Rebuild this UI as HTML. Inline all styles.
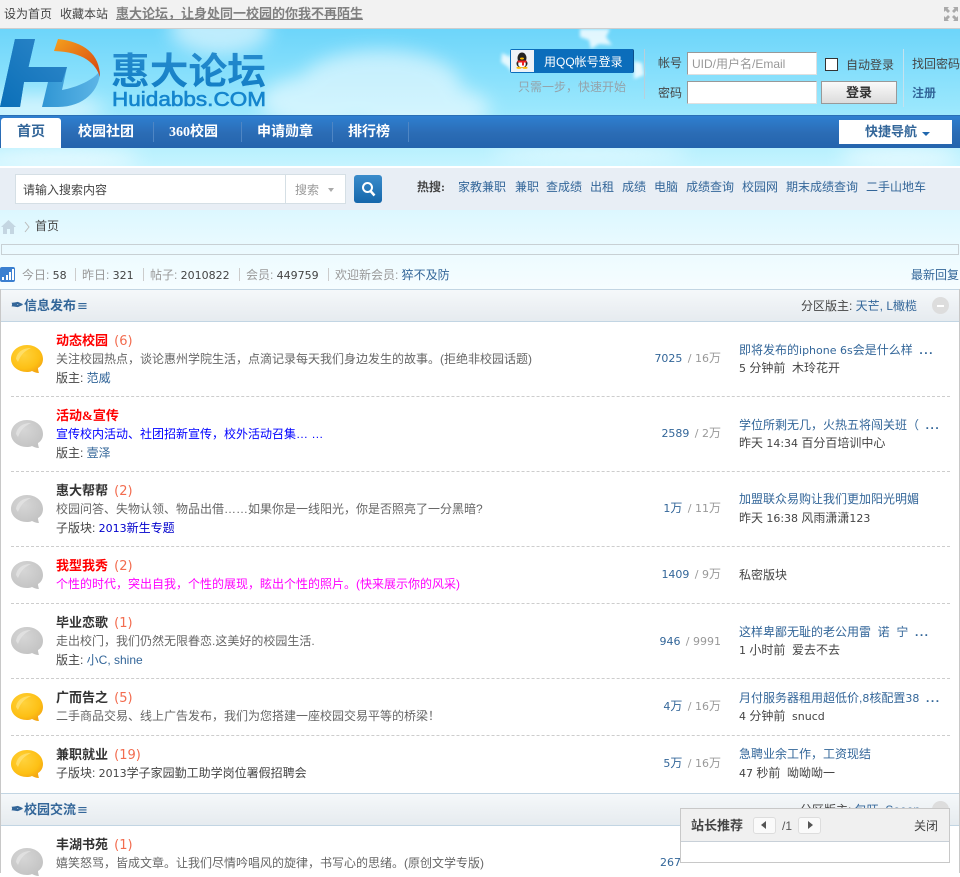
<!DOCTYPE html>
<html lang="zh"><head><meta charset="utf-8"><title>惠大论坛</title>
<style>
html,body{margin:0;padding:0}
body{width:960px;height:873px;overflow:hidden;position:relative;background:#fff;font:12px/16px "Liberation Sans","WenQuanYi Zen Hei","Noto Sans CJK SC",sans-serif;color:#444}
.a{position:absolute;white-space:nowrap}
.l{color:#369}
.g{color:#999}
.m{font-family:"DejaVu Sans",sans-serif;font-size:11px}
.b{font-family:"Liberation Serif","WenQuanYi Zen Hei","Noto Sans CJK SC",sans-serif;font-weight:700}
.c{color:#f26c4f;font:13px "DejaVu Sans",sans-serif;margin-left:2px}
.d{position:absolute;left:11px;right:10px;border-top:1px dashed #cdcdcd;height:0}
.n{color:#fff;font-size:14px;top:125px;font-family:"Liberation Serif","WenQuanYi Zen Hei","Noto Sans CJK SC",sans-serif;font-weight:700}
.s{position:absolute;top:122px;width:1px;height:20px;background:#4f86c4}
.h{position:absolute;left:1px;width:958px;height:31px;border-top:1px solid #c2d5e3;border-bottom:1px solid #c2d5e3;background:linear-gradient(#f5f8fa,#e6ebef)}
.q{display:inline-block;width:13px;font-size:15px;line-height:0}
.e{font:13px "DejaVu Sans",sans-serif;margin-left:1px}
.st{left:641px;width:80px;text-align:right;margin-top:-1px}
.st .g.m{margin-left:2px}
.el{letter-spacing:1.500px;font-weight:700}
</style></head><body>

<div class="a" style="left:0;top:0;width:960px;height:29px;background:#f2f2f2;border-bottom:1px solid #cdcdcd;box-sizing:border-box"></div>
<div class="a" style="left:4px;top:6px;color:#444">设为首页</div>
<div class="a" style="left:60px;top:6px;color:#444">收藏本站</div>
<div class="a b" style="left:116px;top:6px;color:#808080;text-decoration:underline;font-size:13px">惠大论坛，让身处同一校园的你我不再陌生</div>
<svg class="a" style="left:943px;top:6px" width="16" height="16" viewBox="0 0 16 16" fill="#aaa"><path d="M1 1h5L4.500 2.500 7 5 5 7 2.500 4.500 1 6zM15 1v5L13.500 4.500 11 7 9 5 11.500 2.500 10 1zM1 15v-5l1.500 1.500L5 9l2 2-2.500 2.500L6 15zM15 15h-5l1.500-1.500L9 11l2-2 2.500 2.500L15 10z"/></svg>

<!-- sky -->
<div class="a" style="left:0;top:29px;width:960px;height:138px;background:linear-gradient(#6dd5fa,#9ce8fd 60%,#c6f4ff)"></div>
<svg class="a" style="left:0;top:29px" width="960" height="138" viewBox="0 0 960 138">
<defs><filter id="f"><feGaussianBlur stdDeviation="9"/></filter><filter id="f2"><feGaussianBlur stdDeviation="1.500"/></filter></defs>
<g fill="#fff" opacity=".55" filter="url(#f)">
<ellipse cx="320" cy="72" rx="60" ry="26"/><ellipse cx="380" cy="55" rx="80" ry="34"/><ellipse cx="420" cy="80" rx="70" ry="25"/>
<ellipse cx="35" cy="80" rx="70" ry="14"/><ellipse cx="220" cy="0" rx="50" ry="25"/>
<ellipse cx="60" cy="130" rx="80" ry="12"/><ellipse cx="900" cy="128" rx="60" ry="12"/><ellipse cx="590" cy="125" rx="100" ry="8"/>
</g>
<g fill="#fff" opacity=".8" filter="url(#f2)">
<path d="M580 0h30l-4 8 6 8-13-1-8 5-2-9-9-3z"/>
<path d="M502 24l8 4 2-6v22l-4-6-7-5zM634 32l8 2 2 12-10 4z"/>
</g>
</svg>

<!-- logo -->
<svg class="a" style="left:0;top:38px" width="104" height="72" viewBox="0 0 104 72">
<defs>
<linearGradient id="h" x1="0" y1="1" x2="1" y2="0"><stop offset="0" stop-color="#0a6fb8"/><stop offset="1" stop-color="#2f87c9"/></linearGradient>
<linearGradient id="o" x1="0" y1="0" x2="1" y2="1"><stop offset="0" stop-color="#f5a11e"/><stop offset="1" stop-color="#d6420e"/></linearGradient>
<linearGradient id="u" x1="0" y1="0" x2="1" y2="0"><stop offset="0" stop-color="#0f7fc6"/><stop offset="1" stop-color="#5db5e6"/></linearGradient>
</defs>
<path d="M15 1H35L28.500 29H67L62 52C78 49 93 42 100 33C100 52 84 69 58 69H42L48 44H24L20 69H0Z" fill="url(#u)"/>
<path d="M15 1H35L28.500 29H67L62 44H24L20 69H0Z" fill="url(#h)"/>
<path d="M58 1C84 4 100 16 100 39C96 26 84 14 54 13Z" fill="url(#o)"/>
</svg>
<svg class="a" style="left:110px;top:45px" width="160" height="68" viewBox="0 0 160 68">
<defs><linearGradient id="t" x1="0" y1="0" x2="0" y2="1"><stop offset="0" stop-color="#2c8fd0"/><stop offset="1" stop-color="#0f7cc4"/></linearGradient></defs>
<text x="1" y="39" font-family="Noto Sans CJK SC,sans-serif" font-weight="700" font-size="37" textLength="155" lengthAdjust="spacingAndGlyphs" fill="url(#t)">惠大论坛</text>
<text x="2" y="61" font-family="Liberation Sans,sans-serif" font-size="20" textLength="154" lengthAdjust="spacingAndGlyphs" fill="#1485cd" stroke="#1485cd" stroke-width=".6">Huidabbs.COM</text>
</svg>

<!-- qq -->
<div class="a" style="left:510px;top:49px;width:124px;height:24px;background:#0b6dbb;border-right:1px solid #0a4f8c;box-sizing:border-box;border-radius:2px"></div>
<div class="a" style="left:511px;top:50px;width:23px;height:22px;background:#eef2f7"></div>
<svg class="a" style="left:514px;top:52px" width="16" height="17" viewBox="0 0 16 17"><ellipse cx="8" cy="6" rx="4.500" ry="5.500" fill="#222"/><ellipse cx="8" cy="11.500" rx="5.500" ry="4.500" fill="#222"/><ellipse cx="8" cy="12" rx="3.800" ry="3.500" fill="#fff"/><path d="M3.500 8.500h9v2h-2.500v3h-2v-3h-4.500z" fill="#e22"/><ellipse cx="8" cy="6.500" rx="2" ry="1" fill="#fb0"/><ellipse cx="5" cy="15.800" rx="2.600" ry="1.100" fill="#fb0"/><ellipse cx="11" cy="15.800" rx="2.600" ry="1.100" fill="#fb0"/></svg>
<div class="a" style="left:544px;top:54px;color:#fff">用QQ帐号登录</div>
<div class="a" style="left:518px;top:79px;color:#94a3ab">只需一步，快速开始</div>
<div class="a" style="left:644px;top:49px;width:1px;height:50px;background:#b8cfdb"></div>
<div class="a" style="left:658px;top:55px;color:#444">帐号</div>
<div class="a" style="left:658px;top:85px;color:#444">密码</div>
<div class="a" style="left:687px;top:52px;width:130px;height:23px;background:#fff;border:1px solid;border-color:#999 #e0e0e0 #e0e0e0 #999;box-sizing:border-box;padding:3px 4px;color:#999">UID/用户名/Email</div>
<div class="a" style="left:687px;top:81px;width:130px;height:23px;background:#fff;border:1px solid;border-color:#999 #e0e0e0 #e0e0e0 #999;box-sizing:border-box"></div>
<div class="a" style="left:825px;top:58px;width:13px;height:13px;background:#fff;border:1px solid #333;box-sizing:border-box"></div>
<div class="a" style="left:846px;top:57px;color:#444">自动登录</div>
<div class="a b" style="left:821px;top:81px;width:76px;height:23px;background:linear-gradient(#fafafa,#dcdcdc);border:1px solid #999;box-sizing:border-box;text-align:center;line-height:21px;font-size:13px;color:#333">登录</div>
<div class="a" style="left:903px;top:49px;width:1px;height:58px;background:#c4e2ee"></div>
<div class="a" style="left:912px;top:56px;color:#444">找回密码</div>
<div class="a b l" style="left:912px;top:85px">注册</div>

<!-- nav -->
<div class="a" style="left:0;top:115px;width:960px;height:33px;background:linear-gradient(#2e7fd0,#2b6cb5 55%,#2464ad);border-top:1px solid #2a6fb5;box-sizing:border-box"></div>
<div class="a b" style="left:1px;top:118px;width:60px;height:30px;background:#fff;border-radius:3px 3px 0 0;text-align:center;line-height:29px;font-size:14px;color:#369">首页</div>
<div class="a n" style="left:78px">校园社团</div><div class="s" style="left:153px"></div>
<div class="a n" style="left:169px">360校园</div><div class="s" style="left:241px"></div>
<div class="a n" style="left:257px">申请勋章</div><div class="s" style="left:332px"></div>
<div class="a n" style="left:348px">排行榜</div><div class="s" style="left:408px"></div>
<div class="a b l" style="left:839px;top:120px;width:113px;height:24px;background:#fff;box-sizing:border-box;padding-left:26px;line-height:23px;font-size:13px">快捷导航</div>
<div class="a" style="left:922px;top:132px;border:4px solid transparent;border-top-color:#2168ae;border-bottom:0"></div>

<!-- search -->
<div class="a" style="left:0;top:166px;width:960px;height:2px;background:#fff"></div>
<div class="a" style="left:0;top:168px;width:960px;height:42px;background:#e8eef5"></div>
<div class="a" style="left:15px;top:174px;width:331px;height:30px;background:#fff;border:1px solid #d5dfe5;box-sizing:border-box"></div>
<div class="a" style="left:285px;top:175px;width:1px;height:28px;background:#d5dfe5"></div>
<div class="a" style="left:23px;top:182px;color:#444">请输入搜索内容</div>
<div class="a" style="left:295px;top:182px;color:#999">搜索</div>
<div class="a" style="left:328px;top:188px;border:3px solid transparent;border-top:4px solid #aaa;border-bottom:0"></div>
<div class="a" style="left:354px;top:175px;width:28px;height:28px;border-radius:3px;background:linear-gradient(#3a8ccb,#1567ab)"></div>
<svg class="a" style="left:354px;top:175px" width="28" height="28"><circle cx="13.500" cy="12.500" r="4.500" fill="none" stroke="#fff" stroke-width="2"/><path d="M16.500 16l4 4.500" stroke="#fff" stroke-width="2.500"/></svg>
<div class="a b" style="left:417px;top:179px;color:#444">热搜:</div>
<div class="a l" style="left:458px;top:179px">家教兼职</div>
<div class="a l" style="left:515px;top:179px">兼职</div>
<div class="a l" style="left:546px;top:179px">查成绩</div>
<div class="a l" style="left:590px;top:179px">出租</div>
<div class="a l" style="left:622px;top:179px">成绩</div>
<div class="a l" style="left:654px;top:179px">电脑</div>
<div class="a l" style="left:686px;top:179px">成绩查询</div>
<div class="a l" style="left:742px;top:179px">校园网</div>
<div class="a l" style="left:786px;top:179px">期末成绩查询</div>
<div class="a l" style="left:866px;top:179px">二手山地车</div>

<!-- crumbs -->
<div class="a" style="left:0;top:210px;width:960px;height:80px;background:linear-gradient(#dcf7ff,#eefbff 60%,#f6fdff)"></div>
<svg class="a" style="left:1px;top:220px" width="15" height="14" viewBox="0 0 15 14"><path d="M7.500 0L15 7h-2v7H9V9H6v5H2V7H0z" fill="#c4d6e2"/></svg>
<svg class="a" style="left:24px;top:221px" width="6" height="12"><path d="M1 1l4 5-4 5" fill="none" stroke="#bbb"/></svg>
<div class="a" style="left:35px;top:218px;color:#444">首页</div>
<div class="a" style="left:1px;top:244px;width:958px;height:11px;border:1px solid #c8d0d4;box-sizing:border-box"></div>

<svg class="a" style="left:0;top:267px" width="15" height="15"><rect width="15" height="15" rx="2" fill="#3a7fd0"/><path d="M2 10h2v3H2zM6 8h2v5H6zM9 5h2v8H9zM12 2h2v11h-2z" fill="#fff"/></svg>
<div class="a g" style="left:22px;top:267px">今日: <span class="m" style="color:#444">58</span></div>
<div class="a" style="left:75px;top:268px;width:1px;height:13px;background:#ccc"></div>
<div class="a g" style="left:82px;top:267px">昨日: <span class="m" style="color:#444">321</span></div>
<div class="a" style="left:143px;top:268px;width:1px;height:13px;background:#ccc"></div>
<div class="a g" style="left:150px;top:267px">帖子: <span class="m" style="color:#444">2010822</span></div>
<div class="a" style="left:239px;top:268px;width:1px;height:13px;background:#ccc"></div>
<div class="a g" style="left:246px;top:267px">会员: <span class="m" style="color:#444">449759</span></div>
<div class="a" style="left:328px;top:268px;width:1px;height:13px;background:#ccc"></div>
<div class="a g" style="left:335px;top:267px">欢迎新会员: <span class="l">猝不及防</span></div>
<div class="a l" style="left:911px;top:267px">最新回复</div>

<!-- panel -->
<div class="a" style="left:0;top:289px;width:960px;height:584px;background:#fff;border-left:1px solid #c8c8c8;border-right:1px solid #c8c8c8;box-sizing:border-box"></div>
<div class="h" style="top:289px"></div>
<div class="a b l" style="left:11px;top:298px;font-size:13px"><span class="q">✒</span>信息发布<span class="e">≡</span></div>
<div class="a" style="left:801px;top:298px;color:#444">分区版主: <span class="l">天芒, L橄榄</span></div>
<div class="a" style="left:932px;top:297px;width:17px;height:17px;border-radius:50%;background:#ddd"></div>
<div class="a" style="left:937px;top:305px;width:7px;height:2px;background:#fff"></div>

<svg width="0" height="0" style="position:absolute"><defs>
<radialGradient id="y" cx=".4" cy=".35" r=".7"><stop offset="0" stop-color="#ffd23c"/><stop offset=".7" stop-color="#fdc015"/><stop offset="1" stop-color="#f4a612"/></radialGradient>
<radialGradient id="k" cx=".4" cy=".35" r=".7"><stop offset="0" stop-color="#d6d6d6"/><stop offset="1" stop-color="#c2c2c2"/></radialGradient>
<symbol id="by" viewBox="0 0 32 29"><path d="M16 0C25 0 32 6 32 14C32 19 29 22 27 23C27 25 28 28 28 28C25 28 23 27 21 26C19 27 17 27 16 27C7 27 0 21 0 14C0 6 7 0 16 0z" fill="url(#y)"/><path d="M5 14C6 7 12 3 20 3C14 6 10 9 7 17z" fill="#ffe47c" opacity=".7"/></symbol>
<symbol id="bk" viewBox="0 0 32 29"><path d="M16 0C25 0 32 6 32 14C32 19 29 22 27 23C27 25 28 28 28 28C25 28 23 27 21 26C19 27 17 27 16 27C7 27 0 21 0 14C0 6 7 0 16 0z" fill="url(#k)"/><path d="M5 14C6 7 12 3 20 3C14 6 10 9 7 17z" fill="#e4e4e4" opacity=".8"/></symbol>
</defs></svg>

<!-- row1 -->
<svg class="a" style="left:11px;top:345px" width="32" height="29"><use href="#by"/></svg>
<div class="a b" style="left:56px;top:333px;font-size:13px;color:#f00">动态校园<span class="c" style="font-weight:400"> (6)</span></div>
<div class="a" style="left:56px;top:351px;color:#666">关注校园热点，谈论惠州学院生活，点滴记录每天我们身边发生的故事。(拒绝非校园话题)</div>
<div class="a" style="left:56px;top:370px;color:#444">版主: <span class="l">范威</span></div>
<div class="a st" style="top:351px"><span class="l m">7025</span> <span class="g m">/ 16</span><span class="g">万</span></div>
<div class="a l" style="left:739px;top:342px">即将发布的<span class="m">iphone 6s</span>会是什么样 &nbsp;<span class="el">...</span></div>
<div class="a" style="left:739px;top:360px"><span class="m">5</span> 分钟前 &nbsp;木玲花开</div>
<div class="d" style="top:396px"></div>

<!-- row2 -->
<svg class="a" style="left:11px;top:420px" width="32" height="29"><use href="#bk"/></svg>
<div class="a b" style="left:56px;top:408px;font-size:13px;color:#f00">活动&amp;宣传</div>
<div class="a" style="left:56px;top:426px;color:#00f">宣传校内活动、社团招新宣传，校外活动召集… …</div>
<div class="a" style="left:56px;top:445px;color:#444">版主: <span class="l">壹泽</span></div>
<div class="a st" style="top:426px"><span class="l m">2589</span> <span class="g m">/ 2</span><span class="g">万</span></div>
<div class="a l" style="left:739px;top:417px">学位所剩无几，火热五将闯关班（ &nbsp;<span class="el">...</span></div>
<div class="a" style="left:739px;top:435px">昨天 <span class="m">14:34</span> 百分百培训中心</div>
<div class="d" style="top:471px"></div>

<!-- row3 -->
<svg class="a" style="left:11px;top:495px" width="32" height="29"><use href="#bk"/></svg>
<div class="a b" style="left:56px;top:483px;font-size:13px;color:#333">惠大帮帮<span class="c" style="font-weight:400"> (2)</span></div>
<div class="a" style="left:56px;top:501px;color:#666">校园问答、失物认领、物品出借……如果你是一线阳光，你是否照亮了一分黑暗?</div>
<div class="a" style="left:56px;top:520px;color:#444">子版块: <span style="color:#00c"><span class="m">2013</span>新生专题</span></div>
<div class="a st" style="top:501px"><span class="l"><span class="m">1</span>万</span> <span class="g m">/ 11</span><span class="g">万</span></div>
<div class="a l" style="left:739px;top:491px">加盟联众易购让我们更加阳光明媚</div>
<div class="a" style="left:739px;top:510px">昨天 <span class="m">16:38</span> 风雨潇潇<span class="m">123</span></div>
<div class="d" style="top:546px"></div>

<!-- row4 -->
<svg class="a" style="left:11px;top:561px" width="32" height="29"><use href="#bk"/></svg>
<div class="a b" style="left:56px;top:558px;font-size:13px;color:#f00">我型我秀<span class="c" style="font-weight:400"> (2)</span></div>
<div class="a" style="left:56px;top:576px;color:#f0f">个性的时代，突出自我，个性的展现，眩出个性的照片。(快来展示你的风采)</div>
<div class="a st" style="top:567px"><span class="l m">1409</span> <span class="g m">/ 9</span><span class="g">万</span></div>
<div class="a" style="left:739px;top:567px">私密版块</div>
<div class="d" style="top:603px"></div>

<!-- row5 -->
<svg class="a" style="left:11px;top:627px" width="32" height="29"><use href="#bk"/></svg>
<div class="a b" style="left:56px;top:615px;font-size:13px;color:#333">毕业恋歌<span class="c" style="font-weight:400"> (1)</span></div>
<div class="a" style="left:56px;top:633px;color:#666">走出校门，我们仍然无限眷恋.这美好的校园生活.</div>
<div class="a" style="left:56px;top:652px;color:#444">版主: <span class="l">小C, shine</span></div>
<div class="a st" style="top:634px"><span class="l m">946</span> <span class="g m">/ 9991</span></div>
<div class="a l" style="left:739px;top:624px">这样卑鄙无耻的老公用雷 &nbsp;诺 &nbsp;宁 &nbsp;<span class="el">...</span></div>
<div class="a" style="left:739px;top:642px"><span class="m">1</span> 小时前 &nbsp;爱去不去</div>
<div class="d" style="top:678px"></div>

<!-- row6 -->
<svg class="a" style="left:11px;top:693px" width="32" height="29"><use href="#by"/></svg>
<div class="a b" style="left:56px;top:690px;font-size:13px;color:#333">广而告之<span class="c" style="font-weight:400"> (5)</span></div>
<div class="a" style="left:56px;top:708px;color:#666">二手商品交易、线上广告发布，我们为您搭建一座校园交易平等的桥梁！</div>
<div class="a st" style="top:699px"><span class="l"><span class="m">4</span>万</span> <span class="g m">/ 16</span><span class="g">万</span></div>
<div class="a l" style="left:739px;top:690px">月付服务器租用超低价,<span class="m">8</span>核配置<span class="m">38</span> &nbsp;<span class="el">...</span></div>
<div class="a" style="left:739px;top:708px"><span class="m">4</span> 分钟前 &nbsp;<span class="m">snucd</span></div>
<div class="d" style="top:735px"></div>

<!-- row7 -->
<svg class="a" style="left:11px;top:750px" width="32" height="29"><use href="#by"/></svg>
<div class="a b" style="left:56px;top:747px;font-size:13px;color:#333">兼职就业<span class="c" style="font-weight:400"> (19)</span></div>
<div class="a" style="left:56px;top:765px;color:#444">子版块: <span class="m">2013</span>学子家园勤工助学岗位署假招聘会</div>
<div class="a st" style="top:756px"><span class="l"><span class="m">5</span>万</span> <span class="g m">/ 16</span><span class="g">万</span></div>
<div class="a l" style="left:739px;top:746px">急聘业余工作，工资现结</div>
<div class="a" style="left:739px;top:765px"><span class="m">47</span> 秒前 &nbsp;呦呦呦一</div>

<!-- section 2 -->
<div class="h" style="top:793px"></div>
<div class="a b l" style="left:11px;top:802px;font-size:13px"><span class="q">✒</span>校园交流<span class="e">≡</span></div>
<div class="a" style="left:800px;top:802px;color:#444">分区版主: <span class="l">包旺, Soeen</span></div>
<div class="a" style="left:932px;top:801px;width:17px;height:17px;border-radius:50%;background:#ddd"></div>
<svg class="a" style="left:11px;top:848px" width="32" height="29"><use href="#bk"/></svg>
<div class="a b" style="left:56px;top:837px;font-size:13px;color:#333">丰湖书苑<span class="c" style="font-weight:400"> (1)</span></div>
<div class="a" style="left:56px;top:855px;color:#666">嬉笑怒骂，皆成文章。让我们尽情吟唱风的旋律，书写心的思绪。(原创文学专版)</div>
<div class="a l m" style="left:660px;top:855px">267</div>

<!-- popup -->
<div class="a" style="left:680px;top:808px;width:270px;height:55px;background:#fff;border:1px solid #c8c8c8;box-sizing:border-box"></div>
<div class="a" style="left:681px;top:809px;width:268px;height:33px;background:#f0f0f0;border-bottom:1px solid #c8d0d8;box-sizing:border-box"></div>
<div class="a b" style="left:691px;top:818px;color:#444;font-size:13px">站长推荐</div>
<div class="a" style="left:753px;top:817px;width:23px;height:17px;background:#fafafa;border:1px solid #ddd;border-radius:3px;box-sizing:border-box"></div>
<div class="a" style="left:761px;top:821px;border:4px solid transparent;border-right:5px solid #555;border-left:0"></div>
<div class="a" style="left:782px;top:818px;color:#555">/1</div>
<div class="a" style="left:798px;top:817px;width:23px;height:17px;background:#fafafa;border:1px solid #ddd;border-radius:3px;box-sizing:border-box"></div>
<div class="a" style="left:808px;top:821px;border:4px solid transparent;border-left:5px solid #555;border-right:0"></div>
<div class="a" style="left:914px;top:818px;color:#444">关闭</div>

</body></html>
